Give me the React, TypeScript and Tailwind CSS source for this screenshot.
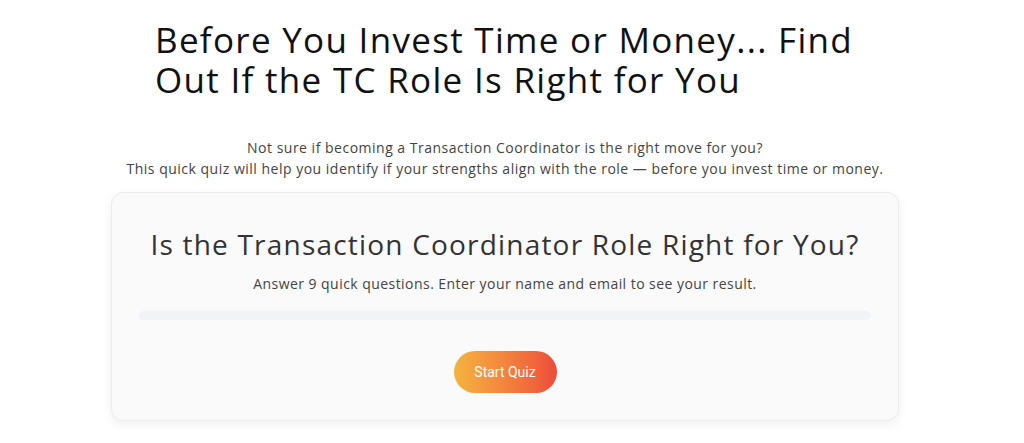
export default function App() {
  return (
    <div className="min-h-screen bg-white font-['Open_Sans',sans-serif]">
      <div className="mx-0 w-[1010px]">
        <div className="mx-auto w-[700px] pt-[20px]">
          <h1 className="text-[35px] leading-[40px] font-normal text-[#111] tracking-[1.3px]">
            Before You Invest Time or Money... Find Out If the TC Role Is Right for You
          </h1>
        </div>

        <div className="mt-[37px] text-center text-[14px] leading-[21px] text-[#444] tracking-[0.5px]">
          <p>Not sure if becoming a Transaction Coordinator is the right move for you?</p>
          <p>This quick quiz will help you identify if your strengths align with the role — before you invest time or money.</p>
        </div>

        <div className="mx-auto mt-[13px] w-[788px] rounded-xl border border-[#ececec] bg-[#fafafa] px-[27px] pt-[33px] pb-[27px] shadow-[0_4px_12px_rgba(0,0,0,0.06)]">
          <h2 className="text-center text-[28px] leading-[36px] text-[#333] tracking-[1.2px]">
            Is the Transaction Coordinator Role Right for You?
          </h2>
          <p className="mt-[12px] text-center text-[14px] leading-[20px] text-[#444] tracking-[0.45px]">
            Answer 9 quick questions. Enter your name and email to see your result.
          </p>
          <div className="mt-[17px] h-[9px] rounded-full bg-[#f1f3f7]" />
          <div className="mt-[31px] flex justify-center">
            <button className="h-[42px] w-[103px] rounded-full bg-gradient-to-r from-[#f4b33f] to-[#ec4b3a] font-['Roboto',sans-serif] text-[14px] text-white">
              Start Quiz
            </button>
          </div>
        </div>
      </div>
    </div>
  );
}
